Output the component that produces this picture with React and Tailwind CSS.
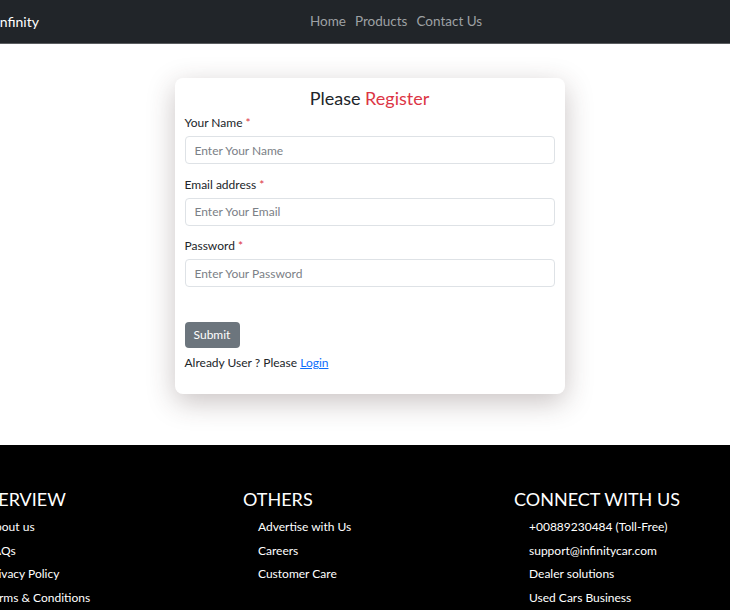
export default function App() {
  const font = { fontFamily: 'Lato, "Noto Sans", sans-serif' };
  const Field = ({ label, placeholder, type }) => (
    <div className="flex flex-col">
      <label className="text-[12px] leading-[18px] text-[#212529]">
        {label} <span className="text-[#dc3545]">*</span>
      </label>
      <input
        type={type}
        placeholder={placeholder}
        className="mt-[4px] h-[28px] w-full rounded-[4px] border border-[#dee2e6] px-[9px] text-[12px] text-[#212529] placeholder:text-[#7b8086] outline-none"
      />
    </div>
  );
  const Col = ({ title, items }) => (
    <div className="w-[271px] shrink-0 flex flex-col">
      <h3 className="text-[18px] leading-[24px] text-white">{title}</h3>
      <ul className="mt-[4px] pl-[15px] flex flex-col">
        {items.map((i) => (
          <li key={i} className="text-[12px] leading-[23.5px] text-white">{i}</li>
        ))}
      </ul>
    </div>
  );
  return (
    <div className="w-[730px] h-[610px] overflow-hidden bg-white" style={font}>
      <nav className="h-[44px] bg-[#212529] border-b border-[#5a5d60] flex items-center">
        <span className="ml-[-4px] text-[14px] text-white">Infinity</span>
        <div className="ml-[271px] flex gap-[9px] text-[13.5px] text-[#9ea1a4]">
          <span>Home</span>
          <span>Products</span>
          <span>Contact Us</span>
        </div>
      </nav>
      <div className="flex justify-center pt-[34px] pb-[51px]">
        <div className="ml-[9px] w-[390px] rounded-[8px] bg-white shadow-[0_8px_28px_rgba(60,40,40,0.28)] px-[10px] pt-[7px] pb-[22px]">
          <h2 className="text-center text-[18px] leading-[27px] text-[#212529]">
            Please <span className="text-[#dc3545]">Register</span>
          </h2>
          <div className="mt-[2px] flex flex-col gap-[11.5px]">
            <Field label="Your Name" placeholder="Enter Your Name" type="text" />
            <Field label="Email address" placeholder="Enter Your Email" type="email" />
            <Field label="Password" placeholder="Enter Your Password" type="password" />
          </div>
          <button className="mt-[35px] h-[26px] w-[55px] rounded-[4px] bg-[#6c757d] text-[12px] text-white">
            Submit
          </button>
          <p className="mt-[6px] text-[12px] leading-[18px] text-[#212529]">
            Already User ? Please <a className="text-[#0d6efd] underline">Login</a>
          </p>
        </div>
      </div>
      <footer className="bg-black h-[200px] pt-[42px]">
        <div className="ml-[-28px] flex">
          <Col title="OVERVIEW" items={["About us", "FAQs", "Privacy Policy", "Terms & Conditions"]} />
          <Col title="OTHERS" items={["Advertise with Us", "Careers", "Customer Care"]} />
          <Col title="CONNECT WITH US" items={["+00889230484 (Toll-Free)", "support@infinitycar.com", "Dealer solutions", "Used Cars Business"]} />
        </div>
      </footer>
    </div>
  );
}
